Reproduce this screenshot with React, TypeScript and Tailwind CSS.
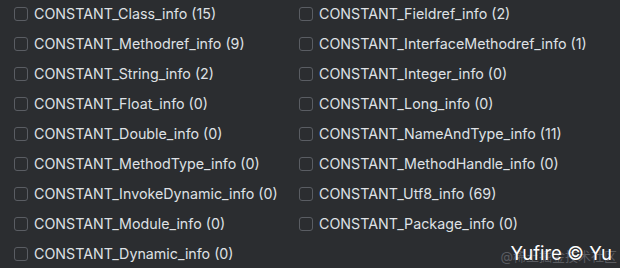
const left = [
  "CONSTANT_Class_info (15)",
  "CONSTANT_Methodref_info (9)",
  "CONSTANT_String_info (2)",
  "CONSTANT_Float_info (0)",
  "CONSTANT_Double_info (0)",
  "CONSTANT_MethodType_info (0)",
  "CONSTANT_InvokeDynamic_info (0)",
  "CONSTANT_Module_info (0)",
  "CONSTANT_Dynamic_info (0)",
];

const right = [
  "CONSTANT_Fieldref_info (2)",
  "CONSTANT_InterfaceMethodref_info (1)",
  "CONSTANT_Integer_info (0)",
  "CONSTANT_Long_info (0)",
  "CONSTANT_NameAndType_info (11)",
  "CONSTANT_MethodHandle_info (0)",
  "CONSTANT_Utf8_info (69)",
  "CONSTANT_Package_info (0)",
];

function Item({ label }: { label: string }) {
  return (
    <label className="flex h-[30px] items-center gap-[6px]">
      <span className="h-[14px] w-[14px] shrink-0 rounded-[3px] border border-[#5a5d63]" />
      <span className="text-[14.25px] text-[#dfe1e5]">{label}</span>
    </label>
  );
}

export default function App() {
  return (
    <div
      className="relative h-[268px] w-[620px] overflow-hidden bg-[#2b2d30]"
      style={{ fontFamily: "Inter, 'Noto Sans CJK SC', sans-serif" }}
    >
      <div className="-mt-px flex pl-[14px]">
        <div className="w-[285px]">
          {left.map((l) => (
            <Item key={l} label={l} />
          ))}
        </div>
        <div>
          {right.map((l) => (
            <Item key={l} label={l} />
          ))}
        </div>
      </div>
      {/* watermark */}
      <div className="absolute bottom-[5px] right-[3px] text-[13px] leading-none text-[#595b60]">
        @稀土掘金技术社区
      </div>
      <div className="absolute bottom-[6px] right-[8px] text-[18.5px] leading-none text-white">
        Yufire © Yu
      </div>
    </div>
  );
}
